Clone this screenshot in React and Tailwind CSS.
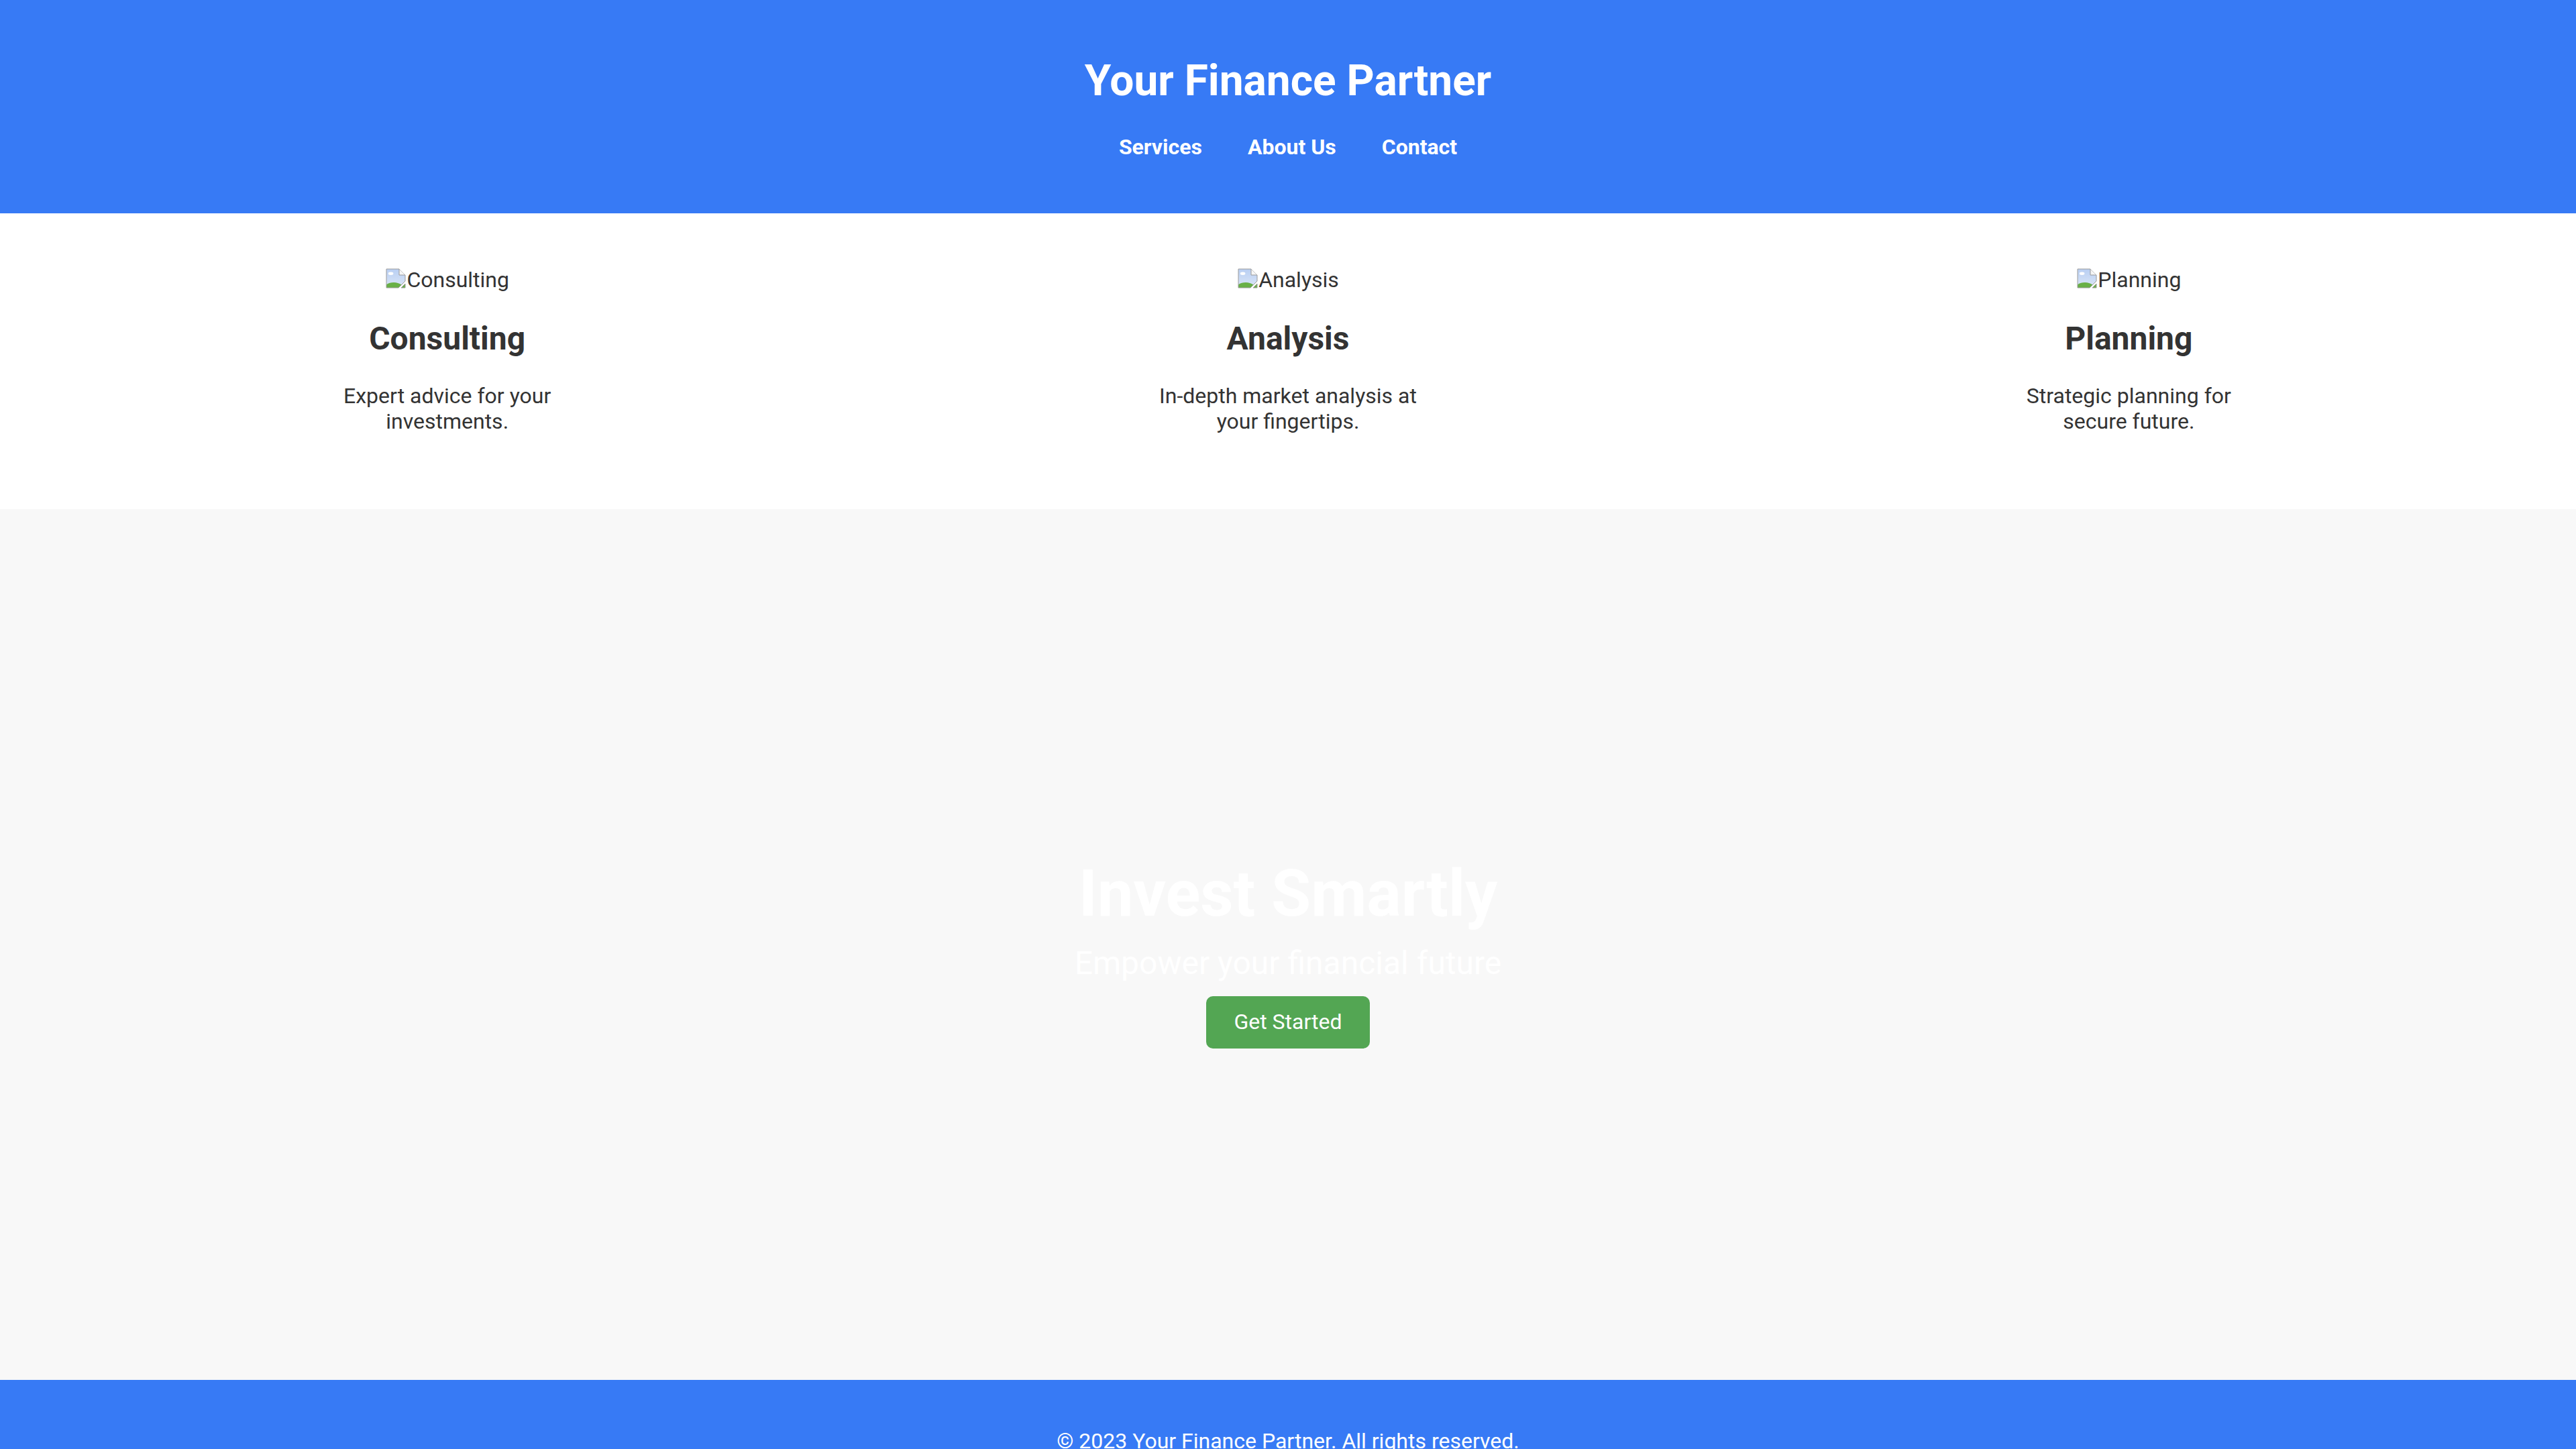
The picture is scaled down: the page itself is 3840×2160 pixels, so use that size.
import React from 'react';

function BrokenImage() {
  return (
    <svg width="32" height="32" viewBox="0 0 16 16" className="shrink-0">
      <defs>
        <linearGradient id="sky" x1="0" y1="0" x2="0" y2="1">
          <stop offset="0" stopColor="#b9cff3" />
          <stop offset="1" stopColor="#dbe6f7" />
        </linearGradient>
        <clipPath id="body">
          <path d="M1 1 H10.5 L15 5.5 V10 L10 15 H1 Z" />
        </clipPath>
      </defs>
      <path d="M1 1 H10.5 L15 5.5 V10 L10 15 H1 Z" fill="url(#sky)" />
      <g clipPath="url(#body)">
        <ellipse cx="6.5" cy="17" rx="8" ry="6" fill="#69b046" />
        <ellipse cx="4.3" cy="4.4" rx="1.9" ry="1.1" fill="#ffffff" />
      </g>
      <path d="M1 1 H10.5 L15 5.5 V10 L10 15 H1 Z" fill="none" stroke="#9a9a9a" strokeWidth="0.5" />
      <path d="M10.5 1 V5.5 H15" fill="#f6f6f6" stroke="#9a9a9a" strokeWidth="0.5" />
      <path d="M12 15 L15 12 V15 Z" fill="#69b046" stroke="#9a9a9a" strokeWidth="0.5" />
    </svg>
  );
}

const services = [
  { title: 'Consulting', desc: 'Expert advice for your investments.' },
  { title: 'Analysis', desc: 'In-depth market analysis at your fingertips.' },
  { title: 'Planning', desc: 'Strategic planning for secure future.' },
];

export default function App() {
  return (
    <div className="font-['Roboto',sans-serif] text-[#333]">
      {/* Header */}
      <header className="bg-[#377af5] h-[318px] flex flex-col items-center pt-[83px]">
        <h1 className="text-white font-bold text-[64px] leading-[75px]">Your Finance Partner</h1>
        <nav className="flex gap-[68px] mt-[43px]">
          {['Services', 'About Us', 'Contact'].map((item) => (
            <a key={item} className="text-white font-bold text-[32px] leading-[37.5px] cursor-pointer">{item}</a>
          ))}
        </nav>
      </header>

      {/* Services */}
      <section className="bg-white h-[441px] grid grid-cols-3 px-[40px] pt-[81px]">
        {services.map((s) => (
          <div key={s.title} className="flex flex-col items-center text-center">
            <div className="flex items-start h-[38px]">
              <BrokenImage />
              <span className="text-[32px] leading-[37.5px]">{s.title}</span>
            </div>
            <h3 className="mt-[40px] text-[48px] leading-[56px] font-bold">{s.title}</h3>
            <p className="mt-[38px] w-[398px] text-[32px] leading-[38px]">{s.desc}</p>
          </div>
        ))}
      </section>

      {/* Hero */}
      <section className="bg-[#f8f8f8] h-[1298px] flex flex-col items-center pt-[517px]">
        <h2 className="text-white font-bold text-[96px] leading-[112px]">Invest Smartly</h2>
        <p className="mt-[20px] text-white text-[48px] leading-[56px]">Empower your financial future</p>
        <button className="mt-[21px] bg-[#53a653] text-white text-[32px] leading-[37.5px] px-[41px] py-[20px] rounded-[10px]">
          Get Started
        </button>
      </section>

      {/* Footer */}
      <footer className="bg-[#377af5] pt-[73px] pb-[73px] text-center">
        <p className="text-white text-[32px] leading-[37.5px]">© 2023 Your Finance Partner. All rights reserved.</p>
      </footer>
    </div>
  );
}
